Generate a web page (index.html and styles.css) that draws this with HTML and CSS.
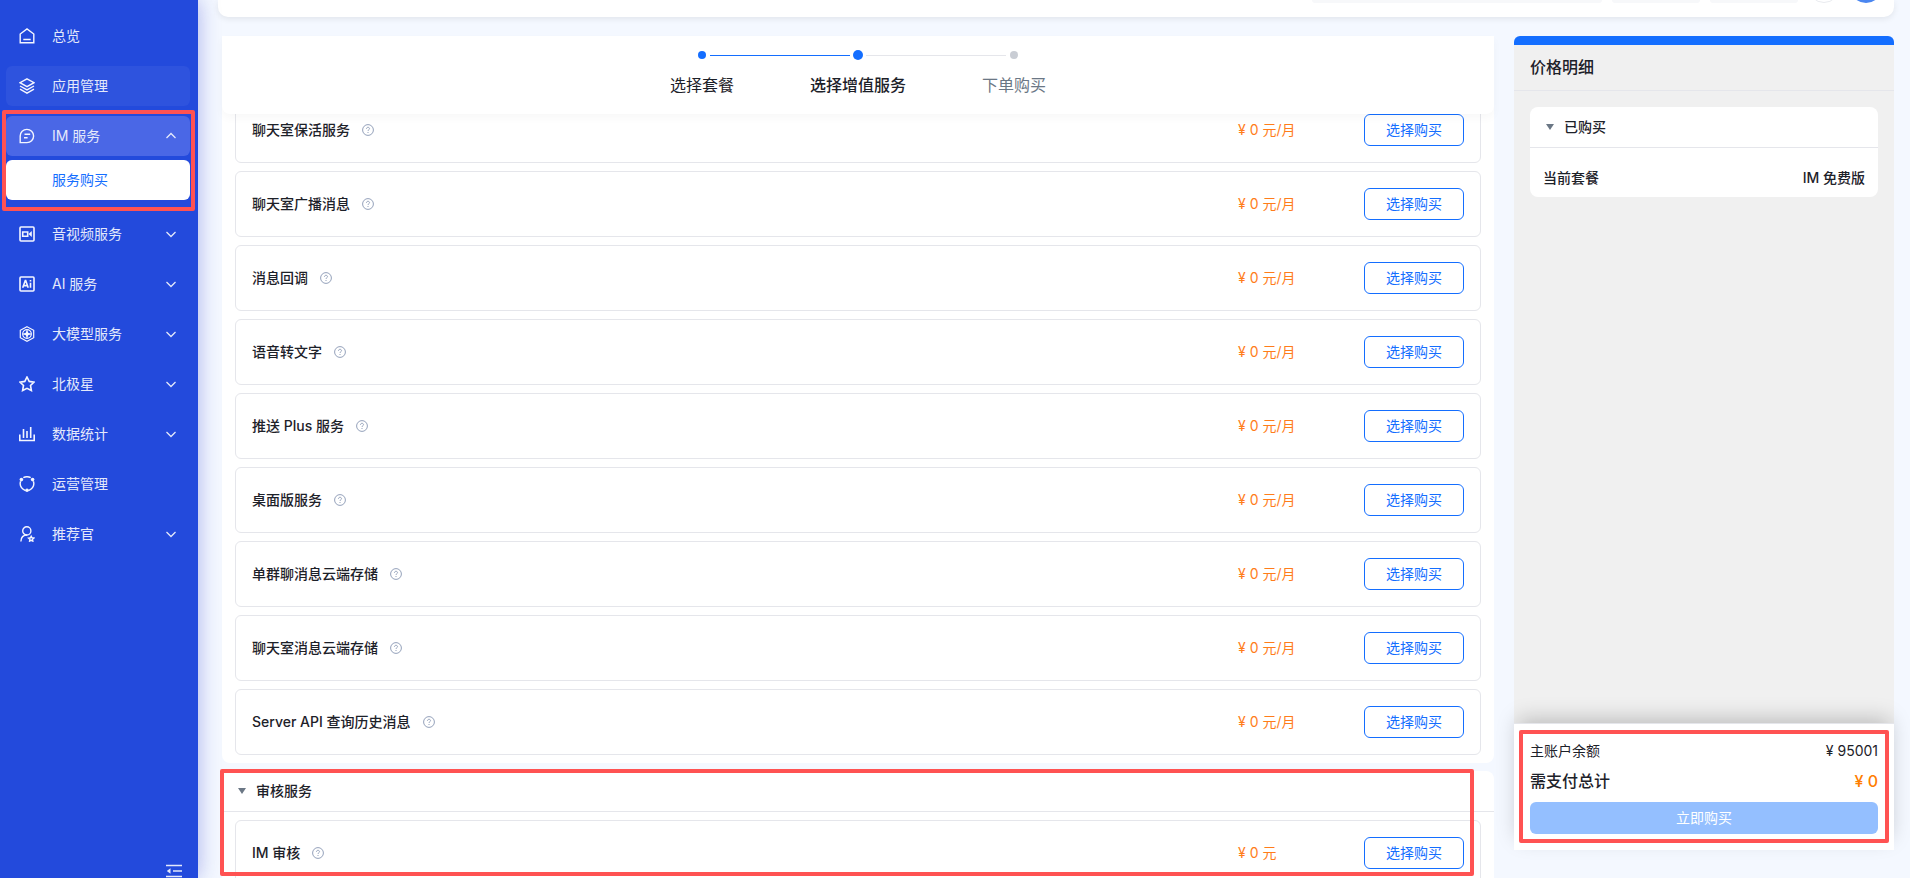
FILE: index.html
```html
<!DOCTYPE html>
<html lang="zh-CN">
<head>
<meta charset="utf-8">
<title>服务购买</title>
<meta name="viewport" content="width=device-width, initial-scale=1">
<link rel="stylesheet" href="styles.css">
</head>
<body>
<svg class="sprite" aria-hidden="true">
  <symbol id="chev" viewBox="0 0 12 12"><path d="M1.5 4 6 8.5 10.5 4"/></symbol>
  <symbol id="help" viewBox="0 0 12 12"><circle cx="6" cy="6" r="5.4"/><path d="M4.500 4.900C4.500 3.900 5.100 3.300 6 3.300S7.500 3.900 7.500 4.700C7.500 5.700 6 5.800 6 7M6 8v1"/></symbol>
</svg>
<div class="app">
  <nav class="side">
    <a class="item" href="#"><svg class="ico" viewBox="0 0 16 16"><path d="M1.200 14.800V6L8 .9 14.800 6v8.800zM4.300 11.500h7.400"/></svg><span>总览</span></a>
    <a class="item soft" href="#"><svg class="ico" viewBox="0 0 16 16"><path d="M8 .8 15 4.700 8 8.600 1 4.700zM1 8l7 3.900L15 8M1 11.200l7 3.900 7-3.900"/></svg><span>应用管理</span></a>
    <div class="group">
      <a class="item active" href="#"><svg class="ico" viewBox="0 0 16 16"><path d="M1.200 14.600V8a6.700 6.600 0 1 1 6.700 6.600zM5.500 6.300h5.700M5 9.700h3.600"/></svg><span>IM 服务</span><svg class="chev up"><use href="#chev"/></svg></a>
      <a class="sub" href="#">服务购买</a>
    </div>
    <a class="item" href="#"><svg class="ico bold" viewBox="0 0 16 16"><rect x="1" y="1" width="14" height="14" rx="1"/><path d="M3.700 6h5v4.200h-5z"/><path class="fill" d="M9.500 8 12.800 5v6z"/></svg><span>音视频服务</span><svg class="chev"><use href="#chev"/></svg></a>
    <a class="item" href="#"><svg class="ico bold" viewBox="0 0 16 16"><rect x="1" y="1" width="14" height="14" rx="1"/><path d="M3.700 11.800 6.300 4.500h.4l2.500 7.300M4.600 9.600h3.800M11.500 6.800v5M11.500 4v1.500"/></svg><span>AI 服务</span><svg class="chev"><use href="#chev"/></svg></a>
    <a class="item" href="#"><svg class="ico thin" viewBox="0 0 16 16"><path d="M8 .7 14.700 4.300v7.400L8 15.300 1.300 11.700V4.300z"/><circle cx="8" cy="8" r="4.300"/><path class="fill" d="M8 2.800 9.200 6.800 13.200 8 9.200 9.200 8 13.200 6.800 9.200 2.800 8 6.800 6.800z"/></svg><span>大模型服务</span><svg class="chev"><use href="#chev"/></svg></a>
    <a class="item" href="#"><svg class="ico bold" viewBox="0 0 16 16"><path d="M8 1 10.200 5.400 15.100 6.100 11.500 9.500 12.400 14.500 8 12.300 3.600 14.500 4.500 9.500.9 6.100 5.800 5.400z"/></svg><span>北极星</span><svg class="chev"><use href="#chev"/></svg></a>
    <a class="item" href="#"><svg class="ico bold" viewBox="0 0 16 16"><path d="M.8 8.500v6h14.400v-6M4.500 3v9M8 5v7M11.700 1v11"/></svg><span>数据统计</span><svg class="chev"><use href="#chev"/></svg></a>
    <a class="item" href="#"><svg class="ico" viewBox="0 0 16 16"><path d="M4.300 1.700C6.500.5 9.500.5 11.700 1.700M14.400 5.200C15.600 9 14 12.500 9.500 14.600M6.500 14.600C2 12.500.4 9 1.600 5.200"/><circle class="fill" cx="2.400" cy="3.600" r="1.800"/><circle class="fill" cx="13.600" cy="3.600" r="1.800"/><circle class="fill" cx="8" cy="14.200" r="1.800"/></svg><span>运营管理</span></a>
    <a class="item" href="#"><svg class="ico" viewBox="0 0 16 16"><circle cx="7.800" cy="4.900" r="4.100"/><path d="M1.900 15.500C2 11.500 4.300 9 8.200 9"/><path d="M12.200 10.200l.8 1.600 1.800.3-1.300 1.200.3 1.800-1.600-.8-1.600.8.3-1.800-1.300-1.200 1.800-.3z"/></svg><span>推荐官</span><svg class="chev"><use href="#chev"/></svg></a>
    <button class="fold" aria-label="收起菜单"><svg viewBox="0 0 16 14"><path d="M0 1.500h16M7 7h9M0 12.500h16"/><path class="fill" d="M.8 7 4.500 4.200v5.600z"/></svg></button>
    <i class="mark mark-side"></i>
  </nav>

  <main class="main">
    <header class="top"><i class="pill wide"></i><i class="pill"></i><i class="pill"></i><i class="ring"></i><i class="avatar"></i></header>
    <div class="cols">
      <section class="content">
        <ol class="steps">
          <li class="done">选择套餐</li>
          <li class="now">选择增值服务</li>
          <li>下单购买</li>
        </ol>
        <div class="card first">
          <div class="row"><b>聊天室保活服务</b><svg class="help"><use href="#help"/></svg><span class="price">¥ 0 元/月</span><button class="buy">选择购买</button></div>
          <div class="row"><b>聊天室广播消息</b><svg class="help"><use href="#help"/></svg><span class="price">¥ 0 元/月</span><button class="buy">选择购买</button></div>
          <div class="row"><b>消息回调</b><svg class="help"><use href="#help"/></svg><span class="price">¥ 0 元/月</span><button class="buy">选择购买</button></div>
          <div class="row"><b>语音转文字</b><svg class="help"><use href="#help"/></svg><span class="price">¥ 0 元/月</span><button class="buy">选择购买</button></div>
          <div class="row"><b>推送 Plus 服务</b><svg class="help"><use href="#help"/></svg><span class="price">¥ 0 元/月</span><button class="buy">选择购买</button></div>
          <div class="row"><b>桌面版服务</b><svg class="help"><use href="#help"/></svg><span class="price">¥ 0 元/月</span><button class="buy">选择购买</button></div>
          <div class="row"><b>单群聊消息云端存储</b><svg class="help"><use href="#help"/></svg><span class="price">¥ 0 元/月</span><button class="buy">选择购买</button></div>
          <div class="row"><b>聊天室消息云端存储</b><svg class="help"><use href="#help"/></svg><span class="price">¥ 0 元/月</span><button class="buy">选择购买</button></div>
          <div class="row"><b>Server API 查询历史消息</b><svg class="help"><use href="#help"/></svg><span class="price">¥ 0 元/月</span><button class="buy">选择购买</button></div>
        </div>
        <div class="audit">
          <div class="card">
            <h2 class="head"><i class="tri"></i>审核服务</h2>
            <div class="row"><b>IM 审核</b><svg class="help"><use href="#help"/></svg><span class="price">¥ 0 元</span><button class="buy">选择购买</button></div>
          </div>
          <i class="mark mark-audit"></i>
        </div>
      </section>

      <aside class="bill">
        <h1 class="bill-title">价格明细</h1>
        <div class="bill-body">
          <div class="plan">
            <h2 class="head"><i class="tri"></i>已购买</h2>
            <p class="plan-row"><span>当前套餐</span><span>IM 免费版</span></p>
          </div>
        </div>
        <div class="pay">
          <p class="line"><span>主账户余额</span><span>¥ 95001</span></p>
          <p class="line total"><b>需支付总计</b><strong>¥ 0</strong></p>
          <button class="submit" disabled>立即购买</button>
          <i class="mark mark-pay"></i>
        </div>
      </aside>
    </div>
  </main>
</div>
</body>
</html>
```

FILE: styles.css
```css
* { box-sizing: border-box; }
body, h1, h2, p, ol { margin: 0; padding: 0; }
body {
  background: #f4f8ff;
  color: #1d2129;
  font: 14px/22px Inter, "Noto Sans CJK SC", sans-serif;
  overflow: hidden;
}
button { font: inherit; cursor: pointer; }
a { text-decoration: none; }
.sprite { position: absolute; width: 0; height: 0; }
.app { display: flex; height: 100vh; }

/* sidebar */
.side {
  position: relative;
  z-index: 2;
  flex: none;
  display: flex;
  flex-direction: column;
  gap: 10px;
  width: 198px;
  padding: 16px 8px 0 6px;
  background: #234adc;
  box-shadow: 0 0 20px rgba(35, 50, 200, .36);
}
.item {
  display: flex;
  flex: none;
  align-items: center;
  height: 40px;
  padding: 0 13px;
  border-radius: 6px;
  color: #e4e9fb;
}
.item span { flex: 1; padding-left: 17px; }
.soft { background: #2e53de; }
.active { background: #4a67e6; }
.group { display: flex; flex-direction: column; gap: 4px; margin-bottom: 4px; }
.sub {
  height: 40px;
  padding-left: 46px;
  border-radius: 6px;
  background: #fff;
  color: #146eff;
  line-height: 40px;
}
.ico, .chev, .help, .fold svg { flex: none; fill: none; stroke: currentColor; }
.ico { width: 16px; height: 16px; color: #f4f6ff; stroke-width: 1.4; }
.bold { stroke-width: 1.6; }
.thin { stroke-width: 1.2; }
.ico .fill, .fill { fill: currentColor; stroke: none; }
.chev { width: 12px; height: 12px; stroke-width: 1.3; }
.up { transform: rotate(180deg); }
.fold {
  align-self: flex-end;
  flex: none;
  height: 14px;
  margin: auto 8px 0 0;
  padding: 0;
  border: 0;
  background: none;
  color: #e4e9fb;
}
.fold svg { display: block; width: 16px; height: 14px; stroke-width: 1.4; }

/* highlight frames laid over the interface */
.mark { position: absolute; z-index: 5; border: 4px solid #ff5252; border-radius: 2px; pointer-events: none; }
.mark-side { top: 110px; left: 2px; right: 3px; height: 101px; }
.mark-audit { inset: -2px 20px 2px -2px; }
.mark-pay { inset: 6px 5px 7px; }

/* page */
.main { flex: 1; min-width: 0; display: flex; flex-direction: column; padding-right: 16px; }
.top {
  flex: none;
  display: flex;
  justify-content: flex-end;
  gap: 10px;
  height: 17px;
  margin-left: 20px;
  padding-right: 12px;
  border-radius: 0 0 10px 10px;
  background: #fff;
  box-shadow: 0 2px 6px rgba(0, 0, 0, .08);
  overflow: hidden;
}
.pill { width: 88px; height: 3px; border-radius: 0 0 4px 4px; background: #f7f8fa; }
.wide { width: 290px; }
.ring, .avatar { width: 32px; height: 32px; margin-top: -29px; border-radius: 50%; }
.ring { border: 1px solid #e9ebef; }
.avatar { background: #4a86f0; }
.cols { flex: 1; min-height: 0; display: flex; gap: 20px; padding: 19px 0 0 24px; }
.content { flex: 1; min-width: 0; display: flex; flex-direction: column; }

/* steps */
.steps {
  position: relative;
  z-index: 1;
  flex: none;
  display: flex;
  justify-content: center;
  height: 78px;
  border-radius: 0 0 8px 8px;
  background: #fff;
  box-shadow: 0 4px 10px rgba(0, 0, 0, .03);
  list-style: none;
}
.steps li {
  position: relative;
  width: 156px;
  padding-top: 38px;
  color: #6b7785;
  font-size: 16px;
  text-align: center;
}
.steps li::before {
  content: "";
  position: absolute;
  top: 15px;
  left: 74px;
  width: 8px;
  height: 8px;
  border-radius: 50%;
  background: #c9cdd4;
}
.steps li:not(:last-child)::after {
  content: "";
  position: absolute;
  top: 19px;
  left: 86px;
  width: 140px;
  height: 1px;
  background: #e5e6eb;
}
.steps .done { color: #1d2129; }
.steps .done::before, .steps .now::before { background: #146eff; }
.steps .done:not(:last-child)::after { background: #146eff; }
.steps .now { color: #1d2129; font-weight: 500; }
.steps .now::before { top: 14px; left: 73px; width: 10px; height: 10px; }

/* service list */
.card {
  display: flex;
  flex-direction: column;
  gap: 8px;
  padding: 0 13px 8px;
  border-radius: 8px;
  background: #fff;
}
.first { flex: none; margin: -17px 0 8px; }
.row {
  display: flex;
  align-items: center;
  gap: 12px;
  height: 66px;
  padding: 0 16px;
  border: 1px solid #e5e6eb;
  border-radius: 6px;
}
.row b { font-weight: 500; }
.help { width: 12px; height: 12px; color: #94a1ba; stroke-width: 1; }
.price { width: 114px; margin-left: auto; color: #ff7d1a; }
.buy {
  width: 100px;
  height: 32px;
  padding: 0;
  border: 1px solid #146eff;
  border-radius: 6px;
  background: #fff;
  color: #146eff;
}
.head {
  display: flex;
  align-items: center;
  gap: 10px;
  height: 41px;
  border-bottom: 1px solid #e5e6eb;
  font-size: 14px;
  font-weight: 500;
}
.tri { border: 4px solid transparent; border-top: 6px solid #6b7785; border-bottom: 0; }
.audit { position: relative; flex: 1; min-height: 107px; }
.audit .head { margin: 0 -13px; padding-left: 16px; }

/* bill */
.bill {
  flex: none;
  display: flex;
  flex-direction: column;
  width: 380px;
  margin-bottom: 28px;
  border-top: 9px solid #146eff;
  border-radius: 6px 6px 0 0;
  background: #f0f0f0;
}
.bill-title {
  height: 46px;
  padding-left: 16px;
  border-bottom: 1px solid #e5e6eb;
  font-size: 16px;
  font-weight: 500;
  line-height: 44px;
}
.bill-body { flex: 1; padding: 16px; }
.plan { border-radius: 8px; background: #fff; font-weight: 500; }
.plan .head { padding-left: 16px; }
.plan-row { display: flex; justify-content: space-between; padding: 19px 13px 8px; }
.pay {
  position: relative;
  padding: 16px;
  border-top: 1px solid #e5e6eb;
  background: #fff;
  box-shadow: 0 -8px 20px -4px rgba(0, 0, 0, .22);
}
.line { display: flex; justify-content: space-between; }
.total { padding: 8px 0 10px; font-size: 16px; }
.total b, .total strong { font-weight: 500; }
.total strong { color: #ff7d00; }
.submit {
  display: block;
  width: 100%;
  height: 32px;
  border: 0;
  border-radius: 6px;
  background: #94bfff;
  color: #fff;
}
```
